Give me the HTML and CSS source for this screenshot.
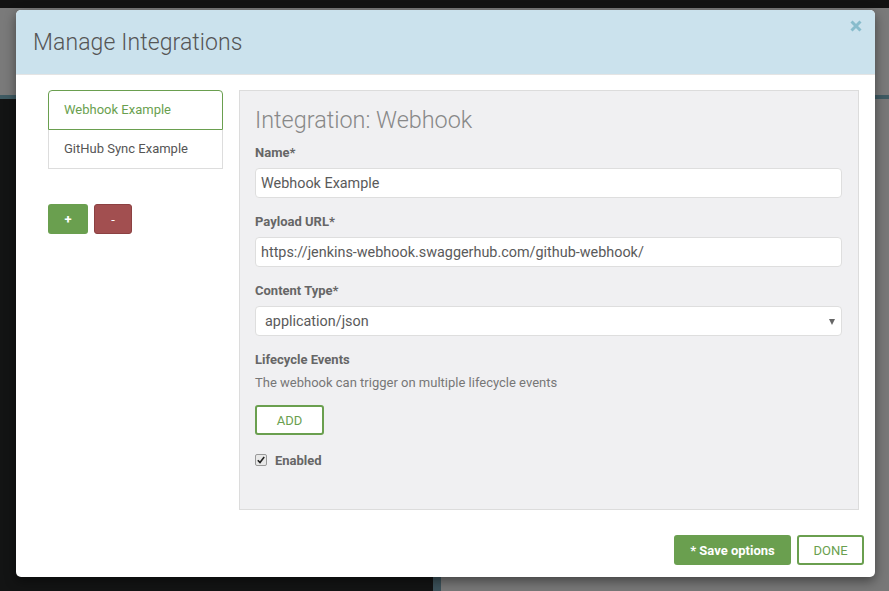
FILE: index.html
```html
<!DOCTYPE html>
<html>
<head>
<meta charset="utf-8">
<link rel="stylesheet" href="styles.css">
</head>
<body>
<div class="backdrop">
  <div class="bd-top"></div>
  <div class="bd-upper"></div>
  <div class="bd-line"></div>
  <div class="bd-lower">
    <div class="bd-dark"></div>
    <div class="bd-teal"></div>
    <div class="bd-grey"></div>
  </div>
</div>
<div class="modal">
  <div class="modal-header">
    <h1 class="modal-title">Manage Integrations</h1>
    <button class="close" aria-label="Close">
      <svg width="12" height="12" viewBox="0 0 12 12"><path d="M1.5 1.5 L10.5 10.5 M10.5 1.5 L1.5 10.5" stroke="#88bccc" stroke-width="3" stroke-linecap="butt"/></svg>
    </button>
  </div>
  <div class="modal-body">
    <div class="sidebar">
      <ul class="int-list">
        <li class="int-item active">Webhook Example</li>
        <li class="int-item">GitHub Sync Example</li>
      </ul>
      <div class="side-buttons">
        <button class="btn-sq btn-add">+</button>
        <button class="btn-sq btn-remove">-</button>
      </div>
    </div>
    <div class="panel">
      <h2 class="panel-title">Integration: Webhook</h2>
      <div class="field">
        <label class="label">Name*</label>
        <div class="input">Webhook Example</div>
      </div>
      <div class="field">
        <label class="label">Payload URL*</label>
        <div class="input">https://jenkins-webhook.swaggerhub.com/github-webhook/</div>
      </div>
      <div class="field">
        <label class="label">Content Type*</label>
        <div class="input select">application/json<span class="caret"></span></div>
      </div>
      <div class="field">
        <label class="label">Lifecycle Events</label>
        <p class="help">The webhook can trigger on multiple lifecycle events</p>
        <button class="btn-outline btn-add-event">ADD</button>
      </div>
      <div class="check-row">
        <span class="checkbox">
          <svg width="8" height="8" viewBox="0 0 8 8"><path d="M0.8 4.2 L3 6.6 L7.2 1" fill="none" stroke="#222" stroke-width="1.6"/></svg>
        </span>
        <span class="check-label">Enabled</span>
      </div>
    </div>
  </div>
  <div class="modal-footer">
    <button class="btn-primary">* Save options</button>
    <button class="btn-outline btn-done">DONE</button>
  </div>
</div>
</body>
</html>
```

FILE: styles.css
```css
* { box-sizing: border-box; }
html, body { margin: 0; padding: 0; }
body {
  font-family: Roboto, "Liberation Sans", Arial, sans-serif;
  width: 889px;
  height: 591px;
  overflow: hidden;
  padding: 10px 14px 0 16px;
  position: relative;
}
.backdrop {
  position: absolute;
  inset: 0;
  display: flex;
  flex-direction: column;
  z-index: 0;
}
.bd-top { height: 8px; background: #121212; }
.bd-upper { height: 87px; background: #7a7a7a; }
.bd-line { height: 4px; background: #3f5b63; }
.bd-lower { flex: 1; display: flex; }
.bd-dark { width: 433px; background: #131414; }
.bd-teal { width: 8px; background: #3c525a; }
.bd-grey { flex: 1; background: #787878; }

.modal {
  position: relative;
  z-index: 1;
  width: 859px;
  height: 567px;
  background: #fff;
  border-radius: 5px;
  overflow: hidden;
  box-shadow: 0 4px 12px rgba(0,0,0,0.45);
  display: flex;
  flex-direction: column;
}
.modal-header {
  height: 65px;
  background: #cbe2ed;
  border-bottom: 1px solid #e4e4e4;
  display: flex;
  justify-content: space-between;
  align-items: flex-start;
  padding: 0 13px 0 17px;
}
.modal-title {
  margin: 20px 0 0 0;
  font-size: 23px;
  font-weight: 300;
  color: #555;
  line-height: 26px;
  letter-spacing: 0.1px;
}
.close {
  margin-top: 10px;
  background: none;
  border: none;
  padding: 0;
  width: 12px;
  height: 12px;
  display: flex;
}
.modal-body {
  display: flex;
  padding: 15px 16px 0 32px;
  gap: 16px;
}
.sidebar { width: 175px; }
.int-list { list-style: none; margin: 0; padding: 0; }
.int-item {
  height: 39px;
  border: 1px solid #dddddd;
  padding-left: 15px;
  padding-bottom: 1px;
  display: flex;
  align-items: center;
  font-size: 13px;
  color: #555;
}
.int-item + .int-item { border-top: none; height: 39px; }
.int-item.active {
  border-color: #6a9f4f;
  color: #6a9f4f;
  border-radius: 4px 4px 0 0;
  height: 40px;
}
.side-buttons { display: flex; gap: 6px; margin-top: 35px; }
.btn-sq {
  height: 30px;
  border: none;
  border-radius: 3px;
  color: #fff;
  font-family: inherit;
  font-weight: 700;
  font-size: 13px;
  padding: 0;
}
.btn-add { width: 40px; background: #6a9f4f; }
.btn-remove { width: 38px; background: #a24f50; border: 1px solid #8c4142; font-weight: 400; }

.panel {
  width: 620px;
  height: 420px;
  background: #f0f0f2;
  border: 1px solid #dcdcdc;
  padding: 16px 16px 0 15px;
}
.panel-title {
  margin: 0 0 11px 0;
  font-size: 23.4px;
  font-weight: 300;
  color: #888;
  line-height: 26px;
}
.field { margin-bottom: 15px; }
.label {
  display: block;
  font-size: 13px;
  font-weight: 700;
  color: #666;
  line-height: 18px;
  margin-bottom: 6px;
}
.input {
  height: 30px;
  background: #fff;
  border: 1px solid #dedede;
  border-radius: 4px;
  padding-left: 5px;
  display: flex;
  align-items: center;
  font-size: 14.4px;
  color: #5a5a5a;
}
.select { position: relative; padding-left: 9px; }
.caret {
  position: absolute;
  right: 6px;
  top: 12px;
  width: 0;
  height: 0;
  border-left: 3px solid transparent;
  border-right: 3px solid transparent;
  border-top: 6px solid #666;
}
.help {
  margin: -1px 0 13px 0;
  font-size: 13px;
  color: #777;
  line-height: 18px;
}
.btn-outline {
  height: 30px;
  background: #fff;
  border: 2px solid #6a9f4f;
  border-radius: 3px;
  color: #6a9f4f;
  font-family: inherit;
  font-size: 13px;
  padding: 0;
}
.btn-add-event { width: 69px; display: block; }
.check-row {
  display: flex;
  align-items: center;
  gap: 8px;
  margin-top: 16px;
  height: 18px;
}
.checkbox {
  width: 12px;
  height: 12px;
  border: 1px solid #999;
  border-radius: 2px;
  background: #e8e8e8;
  display: flex;
  align-items: center;
  justify-content: center;
}
.check-label { font-size: 13px; font-weight: 700; color: #666; }

.modal-footer {
  margin-top: auto;
  display: flex;
  justify-content: flex-end;
  gap: 6px;
  padding: 0 11px 12px 0;
}
.btn-primary {
  width: 117px;
  height: 30px;
  background: #6a9f4f;
  border: none;
  border-radius: 3px;
  color: #fff;
  font-family: inherit;
  font-weight: 700;
  font-size: 13px;
  padding: 0;
}
.btn-done { width: 67px; }
```
